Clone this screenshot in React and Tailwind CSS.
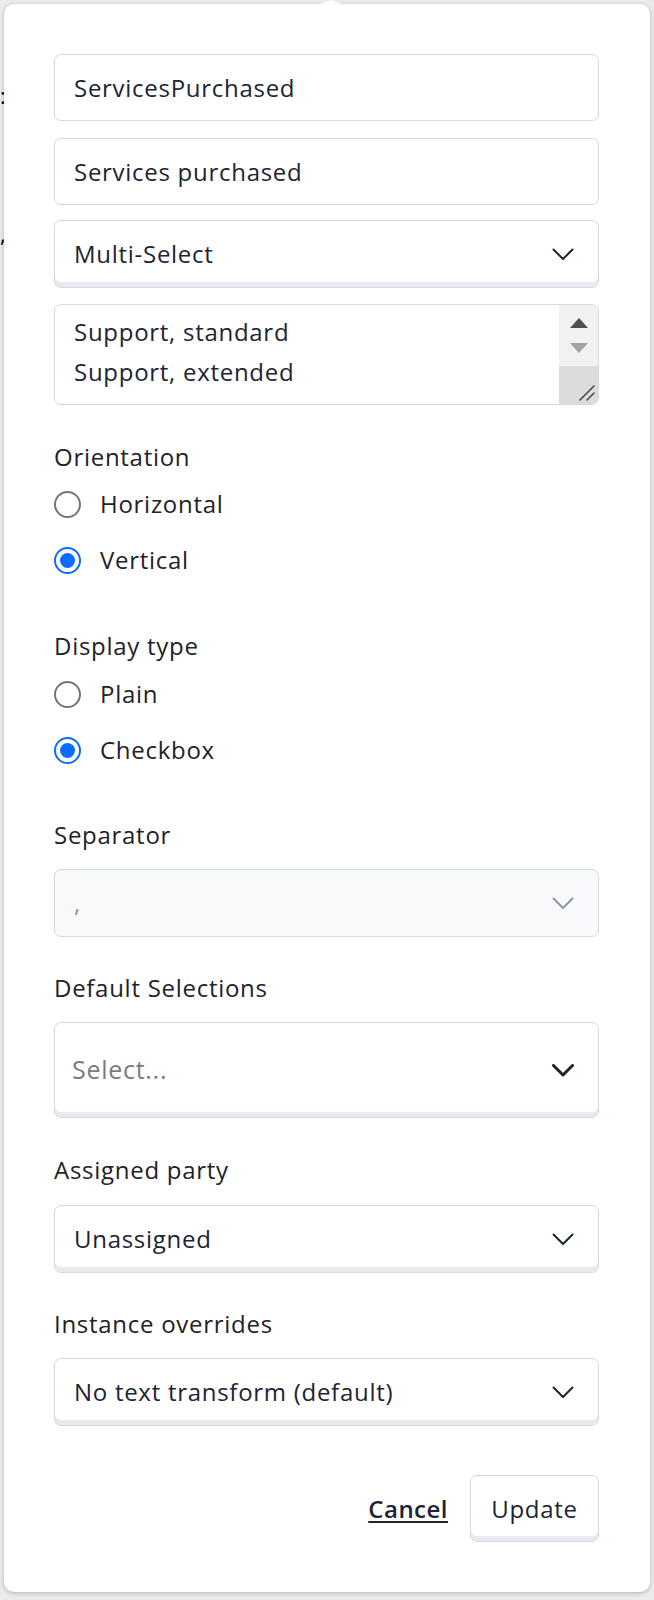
import React from "react"

const font = { fontFamily: "'Open Sans', Lato, sans-serif" }

function Chevron({ className = "", bold = false }) {
  return (
    <svg width="22" height="13" viewBox="0 0 22 13" fill="none" className={className}>
      <path
        d="M1.5 1.5 L11 11 L20.5 1.5"
        stroke="currentColor"
        strokeWidth={bold ? 3 : 2}
        strokeLinecap="round"
        strokeLinejoin="round"
      />
    </svg>
  )
}

function TextInput({ value }) {
  return (
    <div className="h-[67px] flex items-center px-[19px] border border-[#d3d8de] rounded-[7px] bg-white text-[24px] tracking-[0.03em] text-[#1d2433]">
      {value}
    </div>
  )
}

function Select({ value, disabled = false, tall = false, placeholder = false }) {
  return (
    <div
      className={`flex items-center justify-between border border-[#d3d8de] rounded-[7px] pr-[24px] text-[24px] tracking-[0.03em] ${
        tall ? "h-[96px] pl-[17px]" : "h-[68px] pl-[19px]"
      } ${
        disabled
          ? "bg-[#f8f9fa] text-[#8a94a0]"
          : "bg-white text-[#1d2433] shadow-[inset_0_-5px_0_#e7eaee]"
      }`}
    >
      <span className={placeholder ? "text-[#7b7b7b] text-[25px]" : ""}>{value}</span>
      <Chevron
        bold={tall}
        className={disabled ? "text-[#8c96a2]" : "text-[#1d2433]"}
      />
    </div>
  )
}

function Label({ children, className = "" }) {
  return (
    <div className={`h-6 leading-6 text-[24px] tracking-[0.03em] text-[#1f2226] ${className}`}>
      {children}
    </div>
  )
}

function Radio({ label, checked }) {
  return (
    <div className="flex items-center h-7">
      {checked ? (
        <span className="w-[27px] h-[27px] rounded-full border-2 border-[#0b6cff] flex items-center justify-center">
          <span className="w-[15px] h-[15px] rounded-full bg-[#0b6cff]" />
        </span>
      ) : (
        <span className="w-[27px] h-[27px] rounded-full border-2 border-[#747474]" />
      )}
      <span className="ml-[19px] text-[24px] tracking-[0.03em] text-[#1f2226]">{label}</span>
    </div>
  )
}

function OptionsBox() {
  return (
    <div className="h-[101px] flex border border-[#d3d8de] rounded-[7px] bg-white overflow-hidden">
      <div className="flex-1 pl-[19px] pt-[7px] text-[24px] tracking-[0.03em] text-[#1d2433] leading-[40px]">
        <div>Support, standard</div>
        <div>Support, extended</div>
      </div>
      <div className="w-[39px] flex flex-col">
        <div className="flex-1 bg-[#f1f1f1] flex flex-col items-center pt-[13px] gap-[15px]">
          <svg width="18" height="10" viewBox="0 0 18 10">
            <path d="M9 0 L18 10 L0 10 Z" fill="#505050" />
          </svg>
          <svg width="18" height="10" viewBox="0 0 18 10">
            <path d="M0 0 L18 0 L9 10 Z" fill="#a3a3a3" />
          </svg>
        </div>
        <div className="h-[38px] bg-[#dcdcdc] flex items-end justify-end pr-[3px] pb-[3px]">
          <svg width="18" height="18" viewBox="0 0 18 18">
            <path d="M3 17 L17 3 M10 17 L17 10" stroke="#4a4a4a" strokeWidth="1.6" strokeLinecap="round" />
          </svg>
        </div>
      </div>
    </div>
  )
}

export default function App() {
  return (
    <div className="w-[654px] h-[1600px] bg-[#ebebeb] relative overflow-hidden" style={font}>
      {/* page peeking behind the popover */}
      <div className="absolute left-0 top-[84px] text-[22px] leading-none text-black">:</div>
      <div className="absolute left-0 top-[222px] text-[22px] leading-none text-black">,</div>

      <div className="absolute left-[4px] top-[4px] w-[646px] h-[1588px] bg-white rounded-[10px] shadow-[0_1px_4px_rgba(0,0,0,0.25)]">
        {/* notch */}
        <div className="absolute left-[313px] -top-[4px] w-0 h-0 border-l-[14px] border-r-[14px] border-b-[5px] border-l-transparent border-r-transparent border-b-white" />

        <div className="pt-[50px] pl-[50px] pr-[51px]">
          <TextInput value="ServicesPurchased" />
          <div className="mt-[17px]">
            <TextInput value="Services purchased" />
          </div>
          <div className="mt-[15px]">
            <Select value="Multi-Select" />
          </div>
          <div className="mt-[16px]">
            <OptionsBox />
          </div>

          <Label className="mt-[40px]">Orientation</Label>
          <div className="mt-[21px] flex flex-col gap-[28px]">
            <Radio label="Horizontal" />
            <Radio label="Vertical" checked />
          </div>

          <Label className="mt-[60px]">Display type</Label>
          <div className="mt-[22px] flex flex-col gap-[28px]">
            <Radio label="Plain" />
            <Radio label="Checkbox" checked />
          </div>

          <Label className="mt-[59px]">Separator</Label>
          <div className="mt-[22px]">
            <Select value="," disabled />
          </div>

          <Label className="mt-[39px]">Default Selections</Label>
          <div className="mt-[22px]">
            <Select value="Select..." tall placeholder />
          </div>

          <Label className="mt-[40px]">Assigned party</Label>
          <div className="mt-[23px]">
            <Select value="Unassigned" />
          </div>

          <Label className="mt-[39px]">Instance overrides</Label>
          <div className="mt-[22px]">
            <Select value="No text transform (default)" />
          </div>

          <div className="mt-[49px] flex items-center justify-end gap-[22px]">
            <button className="text-[24px] font-semibold tracking-[0.02em] text-[#1d2433] underline underline-offset-[3px]">
              Cancel
            </button>
            <button className="h-[67px] w-[129px] border border-[#d3d8de] rounded-[7px] bg-white shadow-[inset_0_-5px_0_#e7eaee] text-[24px] tracking-[0.03em] text-[#1d2433]">
              Update
            </button>
          </div>
        </div>
      </div>
    </div>
  )
}
